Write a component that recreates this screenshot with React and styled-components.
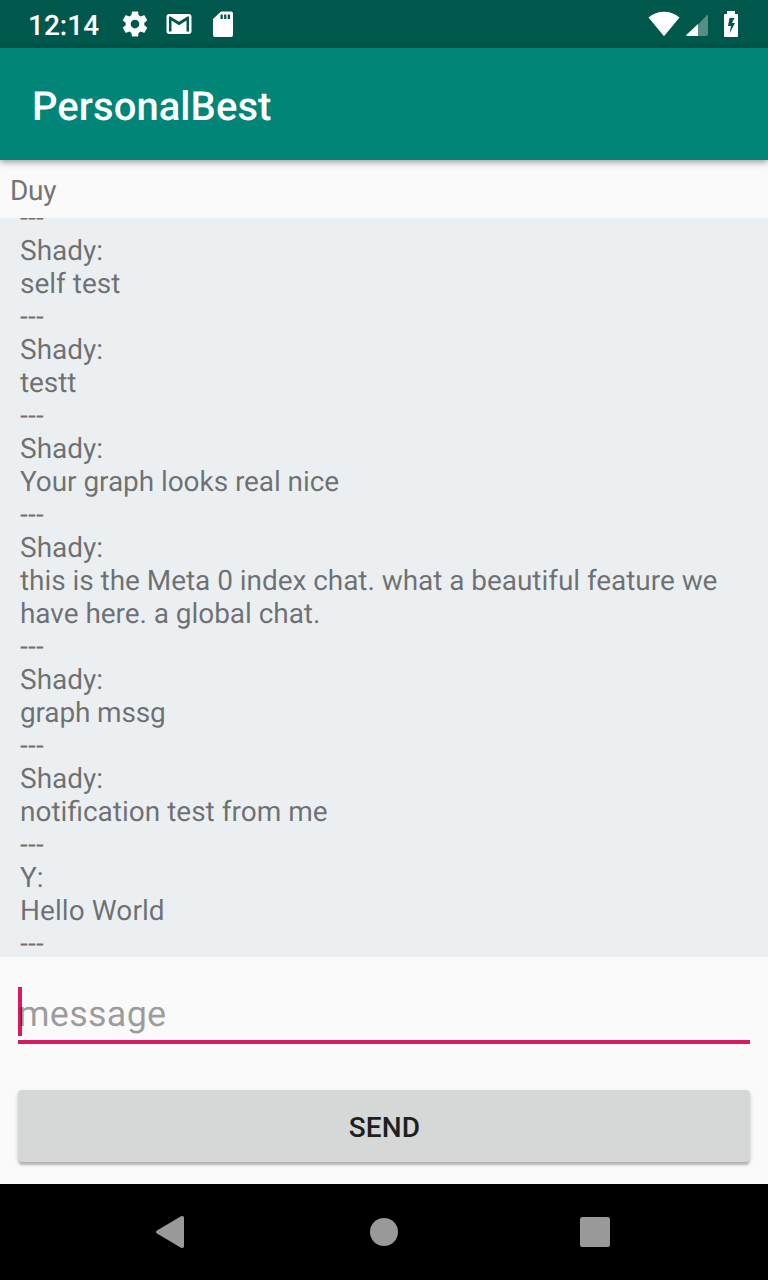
import React from "react";
import styled, { createGlobalStyle } from "styled-components";

const Global = createGlobalStyle`
  * { box-sizing: border-box; }
  body { margin: 0; background: #fafafa; font-family: Roboto, sans-serif; text-rendering: geometricPrecision; }
`;
const Screen = styled.div`
  width: 768px; height: 1280px; display: flex; flex-direction: column; overflow: hidden;
`;
const StatusBar = styled.header`
  height: 48px; flex: none; background: #00574b; color: #fff; display: flex; align-items: center;
  justify-content: space-between; padding: 0 24px 0 28px;
`;
const Group = styled.div`
  display: flex;
  align-items: center;
`;
const Clock = styled.span`
  width: 72px; font-size: 28px; font-weight: 500; line-height: 46px; padding-top: 3px;
`;
const StatusIcon = styled.svg`
  display: block; flex: none; margin-left: ${(p) => p.$gap || 0}px;
`;
const AppBar = styled.div`
  height: 112px; flex: none; background: #008577; padding: 4px 32px 0; display: flex; align-items: center;
  position: relative; box-shadow: 0 2px 7px rgba(0,0,0,.4);
`;
const Title = styled.h1`margin: 0; color: #fff; font-size: 40px; font-weight: 500; letter-spacing: .06px;`;
const Recipient = styled.div`
  height: 58px; flex: none; padding: 14px 10px 0; color: #757575; font-size: 28px; line-height: 33px;
  letter-spacing: -.3px;
`;
const Chat = styled.main`
  height: 739px; flex: none; background: #ebeff2; overflow: hidden; padding: 0 20px;
`;
const Thread = styled.div`
  display: flex; flex-direction: column; margin-top: -17px;
  color: rgba(0,0,0,.54); font-size: 28px; line-height: 33px;
`;
const Line = styled.p`
  margin: 0; letter-spacing: ${(p) => p.$track || 0}px;
`;
const Composer = styled.div`height: 227px; flex: none; padding: 30px 18px 0;`;
const Field = styled.div`
  height: 57px; border-bottom: 4px solid #d81b60; display: flex; align-items: flex-start;
`;
const Cursor = styled.span`width: 4px; height: 49px; background: #d81b60; margin-right: -4px;`;
const Placeholder = styled.span`
  color: rgba(0,0,0,.38); font-size: 36px; line-height: 54px; letter-spacing: .25px;
`;
const SendButton = styled.button`
  display: block; width: 100%; height: 72px; margin-top: 46px; border: 0; border-radius: 4px; background: #d6d8d7;
  color: #1e1f1f; font: 500 28px Roboto, sans-serif; padding: 2px 0 0 1px; letter-spacing: .15px;
  box-shadow: 0 4px 2px -1px rgba(0,0,0,.16), 0 2px 4px rgba(0,0,0,.2);
`;
const NavBar = styled.nav`
  height: 96px; flex: none; background: #000; display: flex; align-items: center; justify-content: center;
`;

const messages = [
  { from: "Shady:", text: "self test" },
  { from: "Shady:", text: "testt", track: -0.1 },
  { from: "Shady:", text: "Your graph looks real nice", track: -0.07 },
  { from: "Shady:", text: "this is the Meta 0 index chat. what a beautiful feature we have here. a global chat.", track: -0.05 },
  { from: "Shady:", text: "graph mssg", track: -0.15 },
  { from: "Shady:", text: "notification test from me" },
  { from: "Y:", text: "Hello World", track: 0.08 },
];

export default function App() {
  return (
    <Screen>
      <Global />
      <StatusBar>
        <Group>
          <Clock>12:14</Clock>
          <StatusIcon $gap={20} width="30" height="30" viewBox="0 0 24 24" fill="#fff"><path d="M19.43 12.980c.04-.32.07-.64.07-.98s-.03-.66-.07-.98l2.110-1.650c.19-.15.24-.42.12-.64l-2-3.460c-.12-.22-.39-.3-.61-.22l-2.490 1c-.52-.4-1.080-.73-1.690-.98l-.38-2.650C14.460 2.180 14.250 2 14 2h-4c-.25 0-.46.18-.49.42l-.38 2.650c-.61.25-1.170.59-1.690.98l-2.490-1c-.23-.09-.49 0-.61.22l-2 3.460c-.13.22-.07.49.12.64l2.110 1.650c-.04.32-.07.65-.07.98s.03.66.07.98l-2.110 1.650c-.19.15-.24.42-.12.64l2 3.460c.12.22.39.3.61.22l2.490-1c.52.4 1.080.73 1.690.98l.38 2.650c.03.24.24.42.49.42h4c.25 0 .46-.18.49-.42l.38-2.650c.61-.25 1.170-.59 1.690-.98l2.490 1c.23.09.49 0 .61-.22l2-3.460c.12-.22.07-.49-.12-.64l-2.110-1.650zM12 15.500c-1.930 0-3.500-1.570-3.500-3.500s1.570-3.500 3.500-3.500 3.500 1.570 3.500 3.500-1.570 3.500-3.500 3.500z" /></StatusIcon>
          <StatusIcon $gap={14} width="30" height="30" viewBox="0 0 24 24" fill="#fff"><path d="M20 4H4c-1.100 0-2 .9-2 2v12c0 1.100.9 2 2 2h16c1.100 0 2-.9 2-2V6c0-1.100-.9-2-2-2zm0 14h-2V9.250L12 13 6 9.250V18H4V6h1.200l6.800 4.250L18.800 6H20v12z" /></StatusIcon>
          <StatusIcon $gap={19} width="20" height="26" viewBox="0 0 20 26" fill="#fff" fillRule="evenodd"><path d="M8 .5h10a2 2 0 0 1 2 2v21.500a2 2 0 0 1-2 2H2a2 2 0 0 1-2-2V8zM7.500 3.500v4.500h2.300V3.500zm3.600 0v4.500h2.300V3.500zm3.600 0v4.500H17V3.500z" /></StatusIcon>
        </Group>
        <Group>
          <StatusIcon width="32" height="26" viewBox="0 0 32 26" fill="#fff"><path d="M.5 6.500C9-1.200 23-1.200 31.500 6.500L16.800 24.300q-.8 1-1.600 0z" /></StatusIcon>
          <StatusIcon $gap={6} width="22" height="24" viewBox="0 0 22 24" fill="#fff"><path d="M12 12.500L20.500 3.500Q22 2 22 4V22q0 2-2 2h-8z" opacity=".33" /><path d="M12 12V24H1.500Q-.5 24 .8 22.500z" /></StatusIcon>
          <StatusIcon $gap={16} width="20" height="26" viewBox="0 0 20 26" fill="#fff" fillRule="evenodd"><path d="M3 0h8v3h2a1 1 0 0 1 1 1v21a1 1 0 0 1-1 1H1a1 1 0 0 1-1-1V4a1 1 0 0 1 1-1h2zM5.500 7L4 15h3L5.500 22.500L11 12H8L10.500 7z" /></StatusIcon>
        </Group>
      </StatusBar>
      <AppBar><Title>PersonalBest</Title></AppBar>
      <Recipient>Duy</Recipient>
      <Chat>
        <Thread>
          <Line $track={0.2}>---</Line>
          {messages.map((m, i) => (
            <React.Fragment key={i}>
              <Line>{m.from}</Line>
              <Line $track={m.track}>{m.text}</Line>
              <Line $track={0.2}>---</Line>
            </React.Fragment>
          ))}
        </Thread>
      </Chat>
      <Composer>
        <Field><Cursor /><Placeholder>message</Placeholder></Field>
        <SendButton>SEND</SendButton>
      </Composer>
      <NavBar>
        <svg width="768" height="96" viewBox="0 0 768 96" fill="#999"><path d="M157 46.500L181 32.300Q184 31 184 34V62Q184 65 181 63.700L157 49.500Q155 48 157 46.500z" /><circle cx="384" cy="48" r="14" /><rect x="580" y="33" width="30" height="30" rx="2.500" /></svg>
      </NavBar>
    </Screen>
  );
}
